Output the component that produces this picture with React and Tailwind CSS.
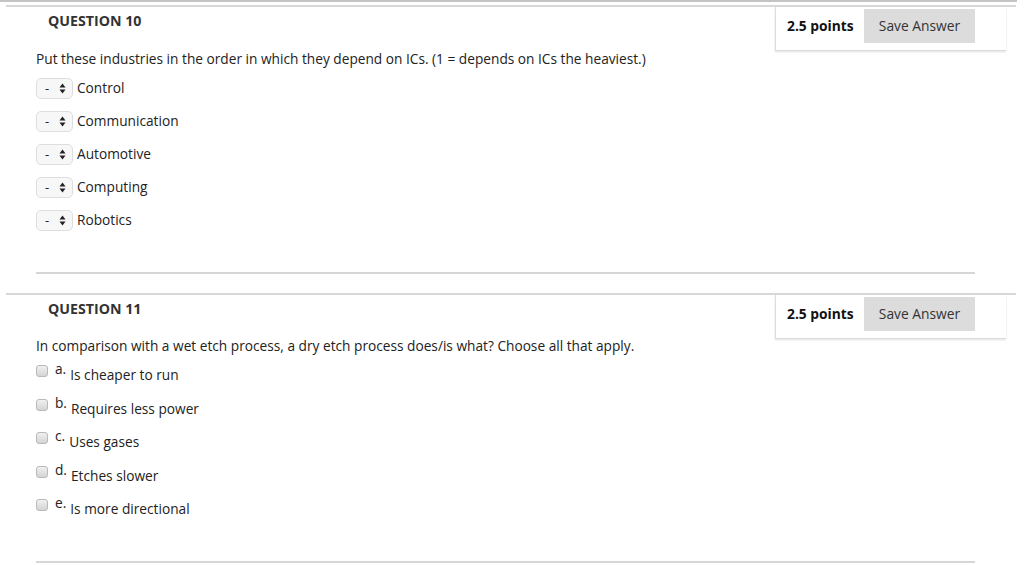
import React from 'react';

const font = { fontFamily: '"Open Sans", "Liberation Sans", sans-serif' };

function PointsBox() {
  return (
    <div className="flex items-center border-l border-b border-[#dcdcdc] shadow-[0_1px_2px_rgba(0,0,0,0.12)] pl-[11px] pr-[31px] pt-[2px] pb-[7px] mr-[10px]">
      <span className="text-[13.8px] font-bold text-[#111] w-[77px]">2.5 points</span>
      <button className="w-[111px] h-[34px] bg-[#dcdcdc] text-[13.8px] text-[#333]">Save Answer</button>
    </div>
  );
}

function Arrows() {
  return (
    <svg width="7" height="11" viewBox="0 0 7 11">
      <path d="M3.5 0.5 L6.5 4.5 L0.5 4.5 Z" fill="#222" />
      <path d="M3.5 10.5 L6.5 6.5 L0.5 6.5 Z" fill="#222" />
    </svg>
  );
}

function OrderRow({ label }) {
  return (
    <div className="flex items-center h-[21px]">
      <div className="w-[37px] h-[21px] rounded-[5px] border border-[#dedede] bg-[#f7f7f7] flex items-center pl-[8px] gap-[10px]">
        <span className="text-[13px] text-[#222] leading-none">-</span>
        <Arrows />
      </div>
      <span className="ml-[4px] text-[13.7px] text-[#222]">{label}</span>
    </div>
  );
}

function CheckRow({ letter, label }) {
  return (
    <div className="flex items-start h-[20px]">
      <div className="mt-[3px] w-[12px] h-[12px] rounded-[3px] border border-[#b9b9b9] bg-gradient-to-b from-[#f0f0f0] to-[#d4d4d4]" />
      <span className="ml-[7px] text-[13.7px] text-[#222] leading-[14px]">{letter}</span>
      <span className="ml-[4px] mt-[5px] text-[13.7px] text-[#222] leading-[16px]">{label}</span>
    </div>
  );
}

function Header({ title }) {
  return (
    <div className="flex justify-between">
      <div className="pl-[42px] pt-[5px] text-[14.2px] leading-[18px] font-bold text-[#333]">{title}</div>
      <PointsBox />
    </div>
  );
}

export default function App() {
  const industries = ['Control', 'Communication', 'Automotive', 'Computing', 'Robotics'];
  const options = [
    ['a.', 'Is cheaper to run'],
    ['b.', 'Requires less power'],
    ['c.', 'Uses gases'],
    ['d.', 'Etches slower'],
    ['e.', 'Is more directional'],
  ];

  return (
    <div className="w-[1024px] h-[565px] bg-white overflow-hidden" style={font}>
      <div className="h-[2px] w-[1017px] bg-[#c4c4c4]" />

      {/* Question 10 */}
      <div className="ml-[6px] w-[1010px] mt-[3px] border-t-2 border-[#d8d8d8]">
        <Header title="QUESTION 10" />
        <div className="pl-[30px]">
          <p className="text-[13.7px] leading-[18px] text-[#222] -mt-[1px]">
            Put these industries in the order in which they depend on ICs. (1 = depends on ICs the heaviest.)
          </p>
          <div className="mt-[10px] flex flex-col gap-[12px]">
            {industries.map((i) => (
              <OrderRow key={i} label={i} />
            ))}
          </div>
          <div className="mt-[41px] w-[939px] h-[2px] bg-[#d6d6d6]" />
        </div>
      </div>

      {/* Question 11 */}
      <div className="ml-[6px] w-[1010px] mt-[19px] border-t-2 border-[#d8d8d8]">
        <Header title="QUESTION 11" />
      </div>
      <div className="ml-[36px]">
        <p className="text-[13.7px] leading-[18px] text-[#222] -mt-[2px]">
          In comparison with a wet etch process, a dry etch process does/is what? Choose all that apply.
        </p>
        <div className="mt-[7px] flex flex-col gap-[13.5px]">
          {options.map(([l, t]) => (
            <CheckRow key={l} letter={l} label={t} />
          ))}
        </div>
        <div className="mt-[45px] w-[939px] h-[2px] bg-[#d6d6d6]" />
      </div>
    </div>
  );
}
